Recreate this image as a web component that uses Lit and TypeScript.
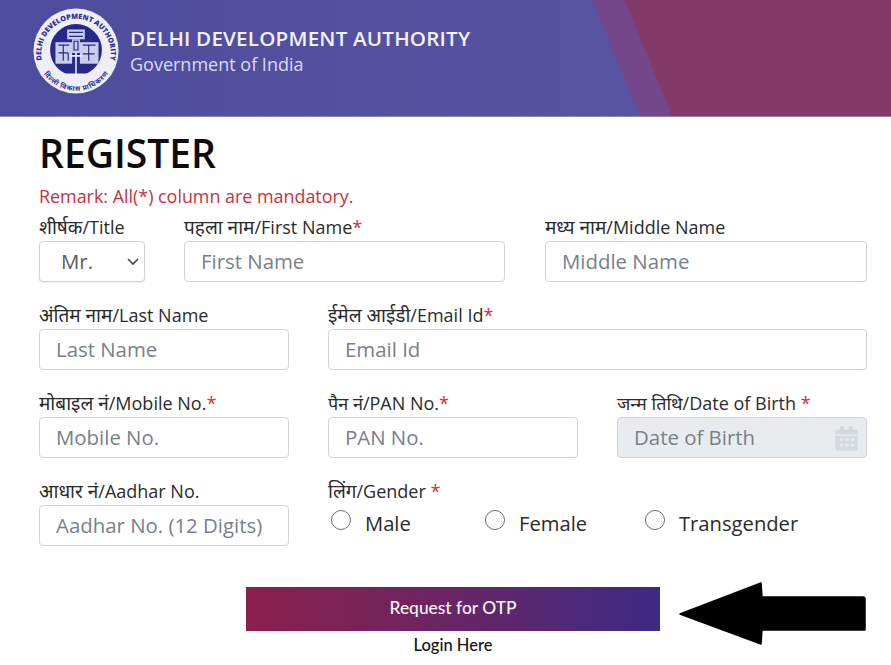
import { LitElement, html, css, svg } from "lit";
import { customElement } from "lit/decorators.js";

const logo = svg`<svg class="logo" viewBox="0 0 90 90" width="88" height="88" aria-hidden="true">
  <defs>
    <path id="arcTop" d="M10.5 56 A35.5 35.5 0 1 1 79.5 56"/>
    <path id="arcBot" d="M14 60 A34 34 0 0 0 76 60"/>
    <clipPath id="seal"><rect x="0" y="0" width="90" height="68"/></clipPath>
  </defs>
  <circle cx="45" cy="45" r="43.5" fill="#eeeef8"/>
  <text font-family="Open Sans, sans-serif" font-size="7.4" font-weight="800" fill="#2e3192"><textPath href="#arcTop" startOffset="50%" text-anchor="middle">DELHI DEVELOPMENT AUTHORITY</textPath></text>
  <text font-family="Noto Sans, sans-serif" font-size="7" font-weight="700" fill="#2e3192"><textPath href="#arcBot" startOffset="50%" text-anchor="middle" dominant-baseline="hanging">दिल्ली विकास प्राधिकरण</textPath></text>
  <circle cx="45" cy="44" r="26.5" fill="#27298a" clip-path="url(#seal)"/>
  <g fill="#c9cdea">
    <rect x="36" y="23" width="18" height="10"/>
    <rect x="24" y="36" width="17" height="22"/>
    <rect x="49" y="36" width="19" height="22"/>
    <rect x="41" y="33" width="8" height="14"/>
  </g>
  <g stroke="#27298a" stroke-width="1.2" fill="none">
    <path d="M27 39h11M32 39v16M27 47h10M37 47v8M52 39h13M58 39v16M52 48h12"/>
    <path d="M43 35h4v9h-4z"/>
    <path d="M38 26h14M38 30h14"/>
  </g>
  <path d="M45 46v24M39 50h12" stroke="#eef0fa" stroke-width="1.6" fill="none"/>
</svg>`;

@customElement("app-root")
export class AppRoot extends LitElement {
  static styles = css`
    :host {
      display: block;
      width: 891px;
      height: 665px;
      overflow: hidden;
      position: relative;
      background: #fff;
      font-family: "Open Sans", "Noto Sans", sans-serif;
      color: #212529;
    }
    * { box-sizing: border-box; }
    header {
      position: relative;
      height: 117px;
      background: linear-gradient(90deg, #4e4c9d 0%, #5c57a3 100%);
      border-bottom: 1px solid #8d86ad;
      display: flex;
      align-items: center;
      padding: 0 0 14px 31px;
      gap: 10px;
      overflow: hidden;
    }
    .slant { position: absolute; inset: 0; width: 891px; height: 116px; }
    .logo { position: relative; flex: none; margin-left: 1px; }
    .brand { position: relative; color: #fff; }
    .brand h1 {
      margin: -2px 0 0;
      font-size: 20.6px;
      line-height: 26px;
      font-weight: 600;
      color: #f1f1fa;
      letter-spacing: 0.2px;
      white-space: nowrap;
    }
    .brand p { margin: 2px 0 0; font-size: 18px; line-height: 23px; color: #dadbf0; }
    main { padding: 11px 24px 0 39px; }
    h2 {
      margin: 0;
      font-size: 39px;
      line-height: 50px;
      font-weight: 600;
      color: #0c0c0c;
    }
    .remark { margin: 7px 0 0; font-size: 17.9px; line-height: 23px; color: #c8323c; white-space: nowrap; }
    .row { display: grid; column-gap: 39px; height: 88px; align-content: start; }
    .r1 { grid-template-columns: 106px 321px 323px; margin-top: 7px; }
    .r1 > :nth-child(3) { padding-left: 1px; }
    .r2 { grid-template-columns: 250px 539px; }
    .r3, .r4 { grid-template-columns: 250px 250px 250px; }
    label, .lbl {
      display: block;
      font-size: 18px;
      line-height: 24px;
      height: 26px;
      color: #2b2b2b;
      white-space: nowrap;
    }
    .hi { font-size: 19px; }
    .req { color: #c8323c; }
    input[type="text"], select {
      display: block;
      width: 100%;
      height: 41px;
      border: 1px solid #ced4da;
      border-radius: 4px;
      background: #fff;
      padding: 0 16px 2px;
      font: inherit;
      font-size: 20.4px;
      color: #6c757d;
      outline: none;
    }
    input::placeholder { color: #78808a; opacity: 1; }
    .sel { position: relative; }
    select { appearance: none; padding-left: 21px; color: #555c63; box-shadow: 0 1px 2px rgba(0,0,0,.08); }
    .chev { position: absolute; right: 5px; top: 16px; pointer-events: none; }
    .date { position: relative; }
    .date input { background: #e9ecef; }
    .cal { position: absolute; right: 6px; top: 33px; }
    .genders { display: flex; align-items: center; height: 30px; margin-top: 3px; }
    label.gender {
      display: flex;
      align-items: center;
      gap: 14px;
      height: 30px;
      font-size: 20.2px;
      line-height: 30px;
      color: #2b2b2b;
      flex: none;
      padding-left: 3px;
    }
    .gender:nth-child(1) { width: 154px; }
    .gender:nth-child(2) { width: 160px; }
    .gender input { appearance: none; margin: 0; width: 20px; height: 20px; border-radius: 50%; border: 1px solid #6f6f6f; background: #fff; flex: none; position: relative; top: -3px; }
    .gcell { grid-column: span 2; }
    .actions { display: flex; flex-direction: column; align-items: center; width: 414px; margin: 20px 0 0 207px; }
    button {
      width: 414px;
      height: 44px;
      border: 0;
      padding: 0 0 3px;
      color: #f7f3f8;
      font-family: "Lato", sans-serif;
      font-size: 17.4px;
      font-weight: 500;
      background: linear-gradient(90deg, #8b1f4b 0%, #6c2562 45%, #3c2a84 100%);
    }
    .login { margin-top: 3px; font-family: "Lato", sans-serif; font-size: 16.5px; line-height: 22px; font-weight: 500; color: #111; text-decoration: none; }
    .arrow { position: absolute; left: 678px; top: 581px; }
  `;

  render() {
    return html`
      <header>
        <svg class="slant" viewBox="0 0 891 116" aria-hidden="true">
          <polygon points="592,0 891,0 891,116 640,116" fill="#74478a"/>
          <polygon points="625,0 891,0 891,116 672,116" fill="#843a68"/>
        </svg>
        ${logo}
        <div class="brand">
          <h1>DELHI DEVELOPMENT AUTHORITY</h1>
          <p>Government of India</p>
        </div>
      </header>
      <main>
        <h2>REGISTER</h2>
        <p class="remark">Remark: All(*) column are mandatory.</p>
        <div class="row r1">
          <div>
            <label><span class="hi">शीर्षक</span>/Title</label>
            <div class="sel">
              <select><option>Mr.</option></select>
              <svg class="chev" width="14" height="9" viewBox="0 0 14 9"><path d="M2 2l5 5 5-5" fill="none" stroke="#444" stroke-width="1.6"/></svg>
            </div>
          </div>
          <div><label><span class="hi">पहला नाम</span>/First Name<span class="req">*</span></label><input type="text" placeholder="First Name"></div>
          <div><label><span class="hi">मध्य नाम</span>/Middle Name</label><input type="text" placeholder="Middle Name"></div>
        </div>
        <div class="row r2">
          <div><label><span class="hi">अंतिम नाम</span>/Last Name</label><input type="text" placeholder="Last Name"></div>
          <div><label><span class="hi">ईमेल आईडी</span>/Email Id<span class="req">*</span></label><input type="text" placeholder="Email Id"></div>
        </div>
        <div class="row r3">
          <div><label><span class="hi">मोबाइल नं</span>/Mobile No.<span class="req">*</span></label><input type="text" placeholder="Mobile No."></div>
          <div><label>पैन नं/PAN No.<span class="req">*</span></label><input type="text" placeholder="PAN No."></div>
          <div class="date">
            <label>जन्म तिथि/Date of Birth <span class="req">*</span></label>
            <input type="text" disabled placeholder="Date of Birth">
            <svg class="cal" width="29" height="29" viewBox="0 0 26 26"><path d="M3 7a2 2 0 0 1 2-2h2V2h4v3h4V2h4v3h2a2 2 0 0 1 2 2v15a2 2 0 0 1-2 2H5a2 2 0 0 1-2-2z" fill="#d3d9df"/><path d="M3 10h20" stroke="#e9ecef" stroke-width="1.2"/><path d="M7 14h3M12 14h3M17 14h3M7 19h3M12 19h3M17 19h3" stroke="#e9ecef" stroke-width="2"/></svg>
          </div>
        </div>
        <div class="row r4">
          <div><label><span class="hi">आधार नं</span>/Aadhar No.</label><input type="text" placeholder="Aadhar No. (12 Digits)"></div>
          <div class="gcell">
            <div class="lbl"><span class="hi">लिंग</span>/Gender <span class="req">*</span></div>
            <div class="genders">
              <label class="gender"><input type="radio" name="g">Male</label>
              <label class="gender"><input type="radio" name="g">Female</label>
              <label class="gender"><input type="radio" name="g">Transgender</label>
            </div>
          </div>
        </div>
        <div class="actions">
          <button>Request for OTP</button>
          <a class="login" href="#">Login Here</a>
        </div>
      </main>
      <svg class="arrow" width="190" height="66" viewBox="0 0 190 66" aria-hidden="true">
        <path d="M2 33 L83 2 L84 16 L185 16 Q187 16 187 18 L187 49 L84 49 L83 63 Z" fill="#000" stroke="#000" stroke-width="1.5" stroke-linejoin="round"/>
      </svg>
    `;
  }
}
